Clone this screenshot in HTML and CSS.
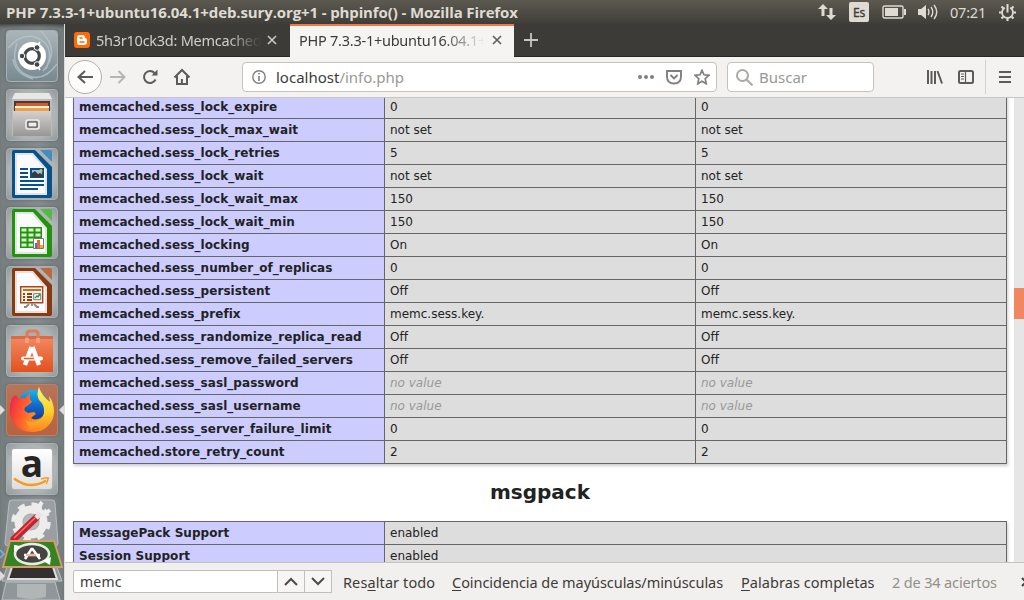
FILE: index.html
```html
<!DOCTYPE html>
<html lang="es">
<head>
<meta charset="utf-8">
<title>phpinfo() - Mozilla Firefox</title>
<link rel="stylesheet" href="styles.css">
</head>
<body>
<div class="desktop">
<header class="panel">
  <span class="window-title">PHP 7.3.3-1+ubuntu16.04.1+deb.sury.org+1 - phpinfo() - Mozilla Firefox</span>
  <div class="indicators">
    <svg class="ind-net" width="18" height="18" viewBox="0 0 18 18" fill="#dfdbd2"><path d="M5 1 0 6h3.500v7h3V6H10zM13 17l5-5h-3.500V5h-3v7H8z"/></svg>
    <span class="keyboard">Es</span>
    <svg class="ind-battery" width="25" height="14" viewBox="0 0 25 14"><rect x="1" y="1" width="20" height="12" rx="1.500" fill="none" stroke="#dfdbd2" stroke-width="1.400"/><path d="M3 3h13v8H3zM22 4h2v6h-2z" fill="#dfdbd2"/></svg>
    <svg class="ind-sound" width="21" height="18" viewBox="0 0 21 18"><path d="M0 6h3l5-4v14l-5-4H0z" fill="#dfdbd2"/><path d="M10 6q2 3 0 6M13 4q3.600 5 0 10M16 2q5.500 7 0 14" fill="none" stroke="#dfdbd2" stroke-width="1.400"/></svg>
    <span class="clock">07:21</span>
    <svg class="ind-gear" width="17" height="17" viewBox="0 0 17 17" fill="none" stroke="#dfdbd2"><path d="M5.800 3.700A5.500 5.500 0 1 0 11.200 3.700" stroke-width="1.800"/><path d="M8.500 0v8.500" stroke-width="2"/><path d="M2.500 2.500l1.800 1.800M14.500 2.500l-1.800 1.800M0 8.500h2.500M14.500 8.500H17M2.500 14.500l1.800-1.800M14.500 14.500l-1.800-1.800M8.500 14.500V17" stroke-width="2.200"/></svg>
  </div>
</header>
<div class="workspace">
<nav class="launcher">
  <div class="tile dash"><svg width="52" height="52" viewBox="0 0 52 52"><path d="M2 18Q20-2 38 12q10 9 2 27M51 34Q36 55 17 43 4 33 11 13M35 1q20 20 2 40M7 29q2 15 20 20" fill="none" stroke="#bdc8cc" stroke-width="1.500" opacity=".7"/><circle cx="26" cy="26" r="14" fill="#fff"/><circle cx="26" cy="26" r="7.300" fill="none" stroke="#42484b" stroke-width="3.200"/><path d="M12 26h7M30 18l4-6M30 34l4 6" stroke="#fff" stroke-width="1.500"/><g fill="#42484b" stroke="#fff"><circle cx="16" cy="26" r="2.800"/><circle cx="31" cy="17.500" r="2.800"/><circle cx="31" cy="34.500" r="2.800"/></g></svg></div>
  <div class="tile"><svg width="52" height="52" viewBox="0 0 52 52"><path d="M9 4h34l3 5v38H6V9z" fill="#bdbbb9"/><path d="M9 4h34l3 6H6z" fill="#e8e7e5"/><path d="M8 12h36v10H8z" fill="#433d39"/><path d="M10 14h32v7H10z" fill="#d65b28"/><path d="M9 17h34v2H9z" fill="#fff3d2"/><path d="M9 19h34v3H9z" fill="#ef9d4a"/><path d="M7 22h38v25H7z" fill="url(#drawer)"/><rect x="20" y="31" width="13" height="9" rx="2" fill="#a8a6a4" stroke="#eee" stroke-width="1.500"/><path d="M22 33h9v5h-9z" fill="#eee" stroke="#444"/><defs><linearGradient id="drawer" x2="0" y2="1"><stop stop-color="#d4d2d0"/><stop offset="1" stop-color="#999795"/></linearGradient></defs></svg></div>
  <div class="tile"><svg width="52" height="52" viewBox="0 0 52 52"><path d="M8 2h21l17 17v29q0 2-2 2H8q-2 0-2-2V4q0-2 2-2z" fill="#07518d"/><path d="M9 5h18l14 16v26H9z" fill="#e2e4e6"/><path d="M11 7h15l13 15v23H11z" fill="#fafafa"/><path d="M34 2h10q2 0 2 2v10z" fill="#408dbe"/><path d="M14 21h8M14 25h8M14 29h8M14 33h24M14 37h24M14 41h18" stroke="#07518d" stroke-width="2"/><path d="M24 20h14v10H24z" fill="#07518d"/><path d="M26 22h10v6H26z" fill="#8ec6e6"/><path d="M26 29v-4l3-2 3 3 2-1 3 2v2z" fill="#3f3930"/><circle cx="35" cy="22.500" r="1.500" fill="#ffb928"/></svg></div>
  <div class="tile"><svg width="52" height="52" viewBox="0 0 52 52"><path d="M8 2h21l17 17v29q0 2-2 2H8q-2 0-2-2V4q0-2 2-2z" fill="#20940b"/><path d="M9 5h18l14 16v26H9z" fill="#e0e5df"/><path d="M11 7h15l13 15v23H11z" fill="#fafafa"/><path d="M34 2h10q2 0 2 2v10z" fill="#54ba43"/><path d="M14 20h22v21H14z" fill="#20940b"/><path d="M15.500 21.500h5v3h-5zm7 0h5v3h-5zm7 0h5v3h-5zm-14 5h5v3h-5zm7 0h5v3h-5zm7 0h5v3h-5zm-14 5h5v3h-5zm7 0h5v3h-5zm-7 5h5v3h-5zm7 0h5v3h-5z" fill="#d7f3cb"/><path d="M27.500 31.500h10v10h-10z" fill="#fff" stroke="#777"/><path d="M29 36h2v5h-2z" fill="#3979b6"/><path d="M31 33h3v8h-3z" fill="#ed672d"/><path d="M34 38h3v3h-3z" fill="#edae24"/></svg></div>
  <div class="tile"><svg width="52" height="52" viewBox="0 0 52 52"><path d="M8 2h21l17 17v29q0 2-2 2H8q-2 0-2-2V4q0-2 2-2z" fill="#8a3a10"/><path d="M9 5h18l14 16v26H9z" fill="#e6e2df"/><path d="M11 7h15l13 15v23H11z" fill="#fafafa"/><path d="M34 2h10q2 0 2 2v10z" fill="#bd6940"/><path d="M14.700 20.700h22v16h-22z" fill="#fff3e5" stroke="#a54819" stroke-width="1.400"/><path d="M17 24h18" stroke="#d06a28" stroke-width="2"/><path d="M17 28h2m2 0h5m-9 3h2m2 0h5m-9 3h2m2 0h5" stroke="#913f16" stroke-width="2"/><path d="M27.700 27.700h7v6h-7z" fill="#fff" stroke="#777"/><path d="M29 32l2-2 1 1 2-3" fill="none" stroke="#15994c" stroke-width="1.400"/><path d="M23 38l-3 3h-2m10-3 3 3h2m-7-4v3" stroke="#888" stroke-width="1.800" fill="none"/></svg></div>
  <div class="tile"><svg width="52" height="52" viewBox="0 0 52 52"><path d="M5 11h42v36H5z" fill="url(#bag)"/><path d="M5 11h42v3H5z" fill="#d96a48"/><path d="M21 17V9q0-3 3-3h5q3 0 3 3v8" fill="none" stroke="#e07b5a" stroke-width="3"/><path d="M21 13v5m11-5v5" stroke="#f59f79" stroke-width="4"/><path d="M25.500 22L19 40m7.500-18L33 40" stroke="#fff" stroke-width="4.500"/><path d="M17 33.500h18" stroke="#fff" stroke-width="4" stroke-linecap="round"/><path d="M18 33.500h10" stroke="#eb642f" stroke-width="1.600"/><defs><linearGradient id="bag" x2="0" y2="1"><stop stop-color="#f28a64"/><stop offset="1" stop-color="#e2521d"/></linearGradient></defs></svg></div>
  <div class="tile firefox"><i class="arrow left"></i><svg width="52" height="52" viewBox="0 0 52 52"><defs><linearGradient id="flame" x2="1" y2=".35"><stop stop-color="#e8204c"/><stop offset=".4" stop-color="#ff5033"/><stop offset="1" stop-color="#ff9d1c"/></linearGradient><linearGradient id="tail" x2="0" y2="1"><stop stop-color="#fff56c"/><stop offset=".55" stop-color="#ffd02a"/><stop offset="1" stop-color="#ff8420"/></linearGradient><linearGradient id="globe" x2="0" y2="1"><stop stop-color="#17b3ee"/><stop offset=".5" stop-color="#126bd0"/><stop offset="1" stop-color="#153a8d"/></linearGradient></defs><path d="M7 13q-4 8-3 17 4 18 23 18 17-1 20-18L38 15H13l-3-4z" fill="url(#flame)"/><circle cx="27" cy="21" r="15" fill="url(#globe)"/><path d="M7 12l4 4q5-3 8-2l5-5v6l2 3-5 4q-4 2-2 5l3 2 6-1 2 2q-3 2-5 4 4 3 9 1l2 9-13 2Q6 42 4 27q0-9 3-15z" fill="url(#flame)"/><path d="M33 3q-3 7 0 13 6 5 5 13-2 9-12 9-4 0-7-2 4 10 15 11Q48 41 48 27q0-8-5-15l1 6q-4-3-7-7-3-4-4-8z" fill="url(#tail)"/></svg><i class="arrow right"></i></div>
  <div class="tile"><div class="amazon"><span>a</span><svg width="38" height="10" viewBox="0 0 38 10"><path d="M1 1.500q16 12 32 2" fill="none" stroke="#f79b20" stroke-width="2.400"/><path d="M28 2q9-2.500 7 0-.5 3-2 5" fill="none" stroke="#f79b20" stroke-width="1.500"/></svg></div></div>
  <div class="folded"><svg width="64" height="104" viewBox="0 0 64 104"><path d="M12 4h40q3 0 3 3l3 40q0 3-3 3H8q-3 0-3-3L9 7q0-3 3-3z" fill="#999fa2" stroke="#b7bcbe"/><g fill="none" stroke="#eeeceb"><circle cx="31" cy="26" r="12.500" stroke-width="8"/><circle cx="31" cy="26" r="17.500" stroke-width="4.500" stroke-dasharray="7 6.740"/></g><circle cx="31" cy="26" r="8" fill="#b4b8ba"/><path d="M14 43l22-21" stroke="#c5242e" stroke-width="7" stroke-linecap="round"/><path d="M14 42l21-20" stroke="#e87573" stroke-width="1.600"/><path d="M36 22l7-7" stroke="#e4e4e3" stroke-width="5"/><path d="M42 6q-4 5-1 9t9-1" fill="none" stroke="#eee" stroke-width="4"/><path d="M9 66h46l7 19H2zM6 86h49l5 18H2z" fill="#8f979b" stroke="#bdc1c3"/><path d="M13 68h39l5 15H8z" fill="#34302f" stroke="#ddd" stroke-width="2"/><path d="M17 88h29v13q-14 4-29 0z" fill="#b2b5b6"/><path d="M10 45h44l8 26H3z" fill="#368325" stroke="#d99a65" stroke-width="1.800"/><ellipse cx="32" cy="58" rx="17" ry="10" fill="#454443" stroke="#e8f0e3" stroke-width="2.500"/><path d="M25 63l6.500-10h1L40 63M24 59h16" fill="none" stroke="#fff" stroke-width="2.600"/><path d="M14 56v-7l7 1zm37 5-1 8-7-4z" fill="#fff"/><path d="M26 59h10" stroke="#e56e32"/><path d="M0 68l4 4-4 4" transform="translate(0 -14)" stroke="#70b7e8" fill="none" stroke-width="1.500"/><path d="M0 75l5 5-5 5z" fill="#ddd"/></svg></div>
</nav>
<main class="browser">
  <div class="tabs">
    <div class="tab inactive"><svg width="16" height="16" viewBox="0 0 16 16"><rect width="16" height="16" rx="3" fill="#ff6a05"/><path d="M5.500 3h3q2.500 0 2.500 3 2 0 2 2v2q0 3-3 3H5.500Q3 13 3 10.500v-5Q3 3 5.500 3z" fill="#fff"/><path d="M6 6h2m-2 4h4" stroke="#ff6a05" stroke-width="1.500" stroke-linecap="round"/></svg><span class="tab-label">5h3r10ck3d: Memcached</span><svg class="close" width="10" height="10" viewBox="0 0 10 10"><path d="M1 1l8 8m0-8L1 9"/></svg></div>
    <div class="tab active"><span class="tab-label">PHP 7.3.3-1+ubuntu16.04.1+</span><svg class="close" width="10" height="10" viewBox="0 0 10 10"><path d="M1 1l8 8m0-8L1 9"/></svg></div>
    <svg class="plus" width="14" height="14" viewBox="0 0 14 14"><path d="M7 0v14M0 7h14" stroke="#c9c6bf" stroke-width="1.800"/></svg>
  </div>
  <div class="toolbar">
    <div class="back"><svg width="18" height="16" viewBox="0 0 18 16"><path d="M17 8H2m7-6L2.500 8 9 14"/></svg></div>
    <svg class="forward" width="16" height="16" viewBox="0 0 16 16"><path d="M0 8h14M8.500 2l6 6-6 6"/></svg>
    <svg class="reload" width="16" height="16" viewBox="0 0 16 16"><path d="M13.500 10.500A6 6 0 1 1 12.500 4"/><path d="M9.500 6.500H15.500v-6z" fill="#5c5b59" stroke="none"/></svg>
    <svg class="home" width="18" height="18" viewBox="0 0 18 18"><path d="M1.500 9.500L9 2l7.500 7.500M4 8v8h10V8M8.900 16v-5"/></svg>
    <div class="url"><svg width="14" height="14" viewBox="0 0 14 14"><circle cx="7" cy="7" r="6.200"/><path d="M7 6v5M7 3v1.600" stroke-width="1.600"/></svg><span class="address">localhost<span>/info.php</span></span>
      <svg class="dots" width="16" height="4" viewBox="0 0 16 4"><circle cx="2" cy="2" r="2"/><circle cx="8" cy="2" r="2"/><circle cx="14" cy="2" r="2"/></svg>
      <svg width="16" height="15" viewBox="0 0 16 15"><path d="M1 1h14v5.500q0 7-7 7t-7-7zM4.500 5L8 8.500 11.500 5" stroke-width="1.900"/></svg>
      <svg width="16" height="16" viewBox="0 0 16 16"><path d="M8 1.300l2 4.500 5 .5-3.800 3.400 1 5L8 12.200l-4.200 2.500 1-5L1 6.300l5-.5z" stroke-width="1.700"/></svg></div>
    <div class="search"><svg width="17" height="17" viewBox="0 0 17 17"><circle cx="6.500" cy="6.500" r="5.500"/><path d="M10.500 10.500l6 6"/></svg><span>Buscar</span></div>
    <svg class="library" width="16" height="14" viewBox="0 0 16 14"><path d="M1 0v14M4.500 1v13M8 1v13M10.500 1L15 13.500"/></svg>
    <svg class="sidebar" width="16" height="14" viewBox="0 0 16 14"><rect x="1" y="1" width="14" height="12" rx="1.500"/><path d="M7.500 1v12M3 4h3M3 6.500h3M3 9h3" stroke-width="1.200"/></svg>
    <i class="divider"></i>
    <svg class="menu" width="12" height="12" viewBox="0 0 12 12"><path d="M0 1h12M0 6h12M0 11h12"/></svg>
  </div>
  <div class="viewport">
    <section class="page">
      <table class="memcached"><colgroup><col><col><col></colgroup><tbody>
        <tr><th>memcached.sess_lock_expire</th><td>0</td><td>0</td></tr>
        <tr><th>memcached.sess_lock_max_wait</th><td>not set</td><td>not set</td></tr>
        <tr><th>memcached.sess_lock_retries</th><td>5</td><td>5</td></tr>
        <tr><th>memcached.sess_lock_wait</th><td>not set</td><td>not set</td></tr>
        <tr><th>memcached.sess_lock_wait_max</th><td>150</td><td>150</td></tr>
        <tr><th>memcached.sess_lock_wait_min</th><td>150</td><td>150</td></tr>
        <tr><th>memcached.sess_locking</th><td>On</td><td>On</td></tr>
        <tr><th>memcached.sess_number_of_replicas</th><td>0</td><td>0</td></tr>
        <tr><th>memcached.sess_persistent</th><td>Off</td><td>Off</td></tr>
        <tr><th>memcached.sess_prefix</th><td>memc.sess.key.</td><td>memc.sess.key.</td></tr>
        <tr><th>memcached.sess_randomize_replica_read</th><td>Off</td><td>Off</td></tr>
        <tr><th>memcached.sess_remove_failed_servers</th><td>Off</td><td>Off</td></tr>
        <tr><th>memcached.sess_sasl_password</th><td><em>no value</em></td><td><em>no value</em></td></tr>
        <tr><th>memcached.sess_sasl_username</th><td><em>no value</em></td><td><em>no value</em></td></tr>
        <tr><th>memcached.sess_server_failure_limit</th><td>0</td><td>0</td></tr>
        <tr><th>memcached.store_retry_count</th><td>2</td><td>2</td></tr>
      </tbody></table>
      <h2>msgpack</h2>
      <table><colgroup><col><col class="wide"></colgroup><tbody>
        <tr><th>MessagePack Support</th><td>enabled</td></tr>
        <tr><th>Session Support</th><td>enabled</td></tr>
      </tbody></table>
    </section>
    <div class="scrollbar"><i></i></div>
  </div>
  <footer class="findbar">
    <div class="find-input">memc</div>
    <div class="find-button"><svg width="14" height="9" viewBox="0 0 14 9"><path d="M1 8l6-6 6 6"/></svg></div>
    <div class="find-button"><svg width="14" height="9" viewBox="0 0 14 9"><path d="M1 1l6 6 6-6"/></svg></div>
    <span class="highlight">Res<u>a</u>ltar todo</span>
    <span class="case"><u>C</u>oincidencia de mayúsculas/minúsculas</span>
    <span class="whole"><u>P</u>alabras completas</span>
    <span class="matches">2 de 34 aciertos</span>
    <svg class="find-close" width="10" height="10" viewBox="0 0 10 10"><path d="M1 1l8 8m0-8L1 9"/></svg>
  </footer>
</main>
</div>
</div>
</body>
</html>
```
FILE: styles.css
```css
* { box-sizing: border-box; }
body { margin: 0; font-family: "Noto Sans", sans-serif; font-size: 14px; color: #3c3b37; }
svg { flex: none; display: block; }
.desktop { width: 1024px; height: 600px; overflow: hidden; display: flex; flex-direction: column; }
.panel { height: 24px; flex: none; display: flex; align-items: center; justify-content: space-between; padding: 0 8px 0 6px; background: linear-gradient(#5c5a50, #3e3d38); color: #dfdbd2; white-space: nowrap; }
.window-title { font-family: "Open Sans", sans-serif; font-weight: 700; font-size: 15px; letter-spacing: -.12px; line-height: 23px; }
.indicators { display: flex; align-items: center; height: 24px; }
.keyboard { margin: 0 13px; width: 20px; height: 20px; border-radius: 2px; background: #dfdbd2; color: #3c3b37; text-align: center; font-size: 12px; line-height: 21px; letter-spacing: -.2px; -webkit-text-stroke: .3px #3c3b37; }
.ind-sound { margin-left: 11px; }
.clock { width: 37px; margin: 0 12px 0 11px; font-size: 14.5px; letter-spacing: -.2px; }
.workspace { flex: 1; min-height: 0; display: flex; }
.launcher { width: 65px; flex: none; padding: 6px 0 0 6px; display: flex; flex-direction: column; gap: 7px; background: linear-gradient(90deg, #777e80, #8c9294 60%, #747b7d); border-right: 1px solid #dbdcdb; box-shadow: inset 0 5px 5px -4px #252b2e; overflow: hidden; }
.tile { width: 52px; height: 52px; flex: none; position: relative; border: 1px solid #aab0b3; border-radius: 4px; background: radial-gradient(circle, #9b9fa1, #b0b5b6 65%, #92999c); box-shadow: 0 0 4px #5d6466; }
.tile > svg { margin: -1px; }
.dash { background: linear-gradient(#aab5b9, #778990); }
.firefox { background: linear-gradient(#b5755a, #b76340); border-color: #bd8067; }
.arrow { position: absolute; top: 20px; border-top: 5px solid transparent; border-bottom: 5px solid transparent; }
.left { left: -7px; border-left: 5px solid #ddd; }
.right { right: -7px; border-right: 5px solid #ddd; }
.amazon { width: 40px; height: 40px; margin: 5px; background: linear-gradient(#fff, #dedede); border-radius: 2px; font: bold 37px/28px "Open Sans", sans-serif; color: #262524; text-align: center; display: flex; flex-direction: column; align-items: center; }
.amazon span { height: 28px; }
.folded { width: 64px; flex: none; margin: -6px 0 0 -6px; }
.browser { flex: 1; min-width: 0; display: flex; flex-direction: column; }
.tabs { height: 33px; flex: none; display: flex; align-items: center; background: #3c3b37; border-bottom: 1px solid #282722; }
.tab { height: 33px; flex: none; display: flex; align-items: center; }
.inactive { width: 225px; padding-left: 9px; color: #d1cec7; }
.inactive .tab-label { width: 165px; margin-left: 6px; -webkit-mask-image: linear-gradient(90deg, #000 80%, transparent); mask-image: linear-gradient(90deg, #000 80%, transparent); }
.active { width: 224px; padding: 0 0 2px 9px; background: #f5f4f2; border-top: 2px solid #f07746; }
.active .tab-label { width: 188px; -webkit-mask-image: linear-gradient(90deg, #000 76%, transparent 99%); mask-image: linear-gradient(90deg, #000 76%, transparent 99%); }
.tab-label { white-space: nowrap; font-size: 14.5px; line-height: 26px; letter-spacing: -.25px; }
.close { margin-left: 6px; fill: none; stroke: #c9c6bf; stroke-width: 1.700; }
.active .close { margin-left: 5px; stroke: #62605c; }
.plus { margin-left: 10px; }
.toolbar { height: 41px; flex: none; border-bottom: 1px solid #c8c5c2; background: #f3f2f0; display: flex; align-items: center; padding-left: 3px; fill: none; stroke: #5c5b59; stroke-width: 2; }
.back { width: 34px; height: 34px; border: 1px solid #b3b0ac; border-radius: 50%; background: #fcfcfb; display: grid; place-items: center; }
.forward { margin-left: 8px; stroke: #b7b5b2; }
.reload { margin-left: 16px; }
.home { margin-left: 15px; }
.url, .search { height: 30px; border: 1px solid #c5c2be; border-radius: 4px; background: #fff; display: flex; align-items: center; }
.url { width: 475px; margin-left: 51px; padding: 0 6px 0 9px; stroke: #807f7d; stroke-width: 1.400; }
.address, .search span { stroke: none; font-size: 15px; }
.address { margin: 0 auto 0 10px; }
.address span { color: #999895; }
.dots { fill: #807f7d; stroke: none; }
.url .dots + svg { margin: 0 12px; }
.search { width: 147px; margin-left: 10px; padding-left: 8px; stroke: #aaa8a5; }
.search span { margin-left: 6px; color: #999895; }
.library { margin-left: 53px; }
.sidebar { margin-left: 15px; }
.divider { width: 1px; height: 34px; margin-left: 11px; background: #d4d1cd; }
.menu { margin-left: 13px; }
.viewport { flex: 1; min-height: 0; display: flex; background: #fff; }
.page { width: 949px; height: 464px; overflow: hidden; padding-left: 8px; font-family: "DejaVu Sans", sans-serif; color: #222; }
table { width: 934px; table-layout: fixed; border-collapse: collapse; box-shadow: 1px 2px 3px #ccc; font-size: 12px; line-height: 14px; }
.memcached { margin-top: -3px; }
col { width: 311px; }
.wide { width: 622px; }
tr { height: 23px; }
th, td { border: 1px solid #666; padding: 4px 5px; text-align: left; vertical-align: baseline; }
th { background: #ccf; font-weight: 700; letter-spacing: .05px; }
td { background: #ddd; }
em { color: #999; }
h2 { margin: 0; height: 57px; text-align: center; font-size: 20px; line-height: 56px; width: 934px; }
.scrollbar { width: 10px; background: #e6e6e6; padding-top: 190px; }
.scrollbar i { display: block; height: 31px; background: #ef8761; }
.findbar { height: 38px; flex: none; border-top: 1px solid #c6c3bf; background: #f1f0ee; display: flex; align-items: center; padding-left: 8px; white-space: nowrap; overflow: hidden; }
.find-input { width: 205px; flex: none; height: 23px; padding-left: 6px; border: 1px solid #c2bfbb; border-radius: 2px 0 0 2px; background: #fff; line-height: 21px; letter-spacing: .2px; }
.find-button { width: 27px; flex: none; height: 23px; border: 1px solid #c2bfbb; border-left: 0; display: grid; place-items: center; background: #f7f6f5; fill: none; stroke: #4c4b48; stroke-width: 2; }
.findbar span { flex: none; font-size: 14.5px; letter-spacing: -.05px; }
.findbar u { text-underline-offset: 2px; }
.findbar .highlight { width: 109px; margin-left: 11px; letter-spacing: .1px; }
.findbar .case { width: 289px; }
.findbar .whole { width: 151px; letter-spacing: .05px; }
.findbar .matches { width: 129px; color: #928f8a; letter-spacing: -.15px; }
.find-close { fill: none; stroke: #444; stroke-width: 2; }
```
